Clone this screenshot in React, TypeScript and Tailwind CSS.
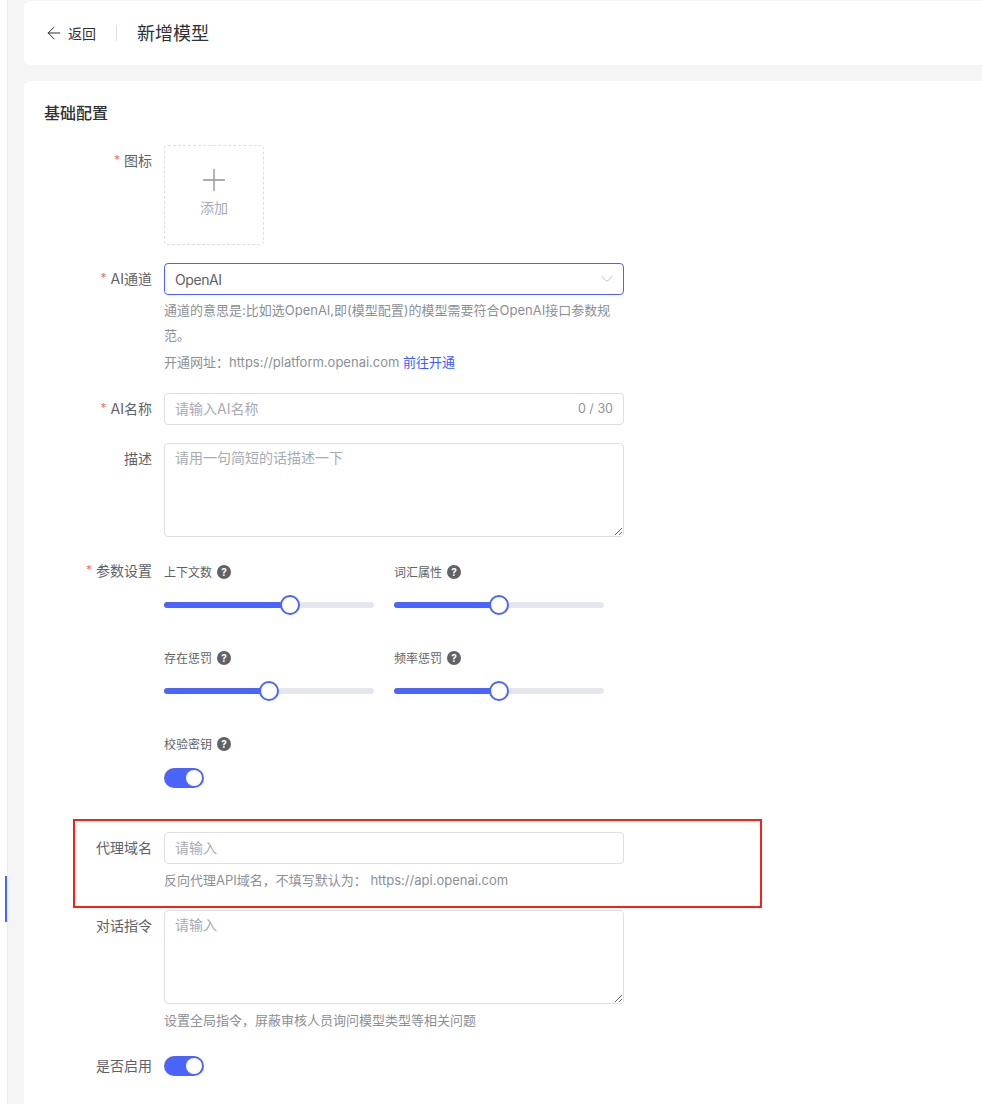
import React from "react";
import { ArrowLeft, ChevronDown, Plus } from "lucide-react";

const font = { fontFamily: '"Inter", "Noto Sans CJK SC", sans-serif' };

function Row({ label, required, className, labelClass, children }: { label: string; required?: boolean; className?: string; labelClass?: string; children: React.ReactNode }) {
  return (
    <div className={`flex ${className ?? ""}`}>
      <div className={`w-[108px] shrink-0 flex justify-end items-center h-[32px] pb-[2px] text-[14px] text-[#5f6268] ${labelClass ?? ""}`}>
        {required && <span className="text-[#f56c6c] mr-[4px] text-[12px] leading-none">*</span>}
        <span>{label}</span>
      </div>
      <div className="ml-[12px] w-[460px]">{children}</div>
    </div>
  );
}

function Help() {
  return (
    <span className="w-[14px] h-[14px] rounded-full bg-[#606266] text-white text-[10px] font-bold leading-none flex items-center justify-center ml-[5px]">?</span>
  );
}

function SliderBlock({ label, pct }: { label: string; pct: number }) {
  return (
    <div className="w-[210px]">
      <div className="flex items-center h-[20px] text-[12px] text-[#606266]">
        <span className="pt-[2px]">{label}</span>
        <Help />
      </div>
      <div className="relative h-[6px] mt-[20px] rounded-full bg-[#e4e7ed]">
        <div className="h-full rounded-full bg-[#4c64fe]" style={{ width: `${pct}%` }} />
        <div className="absolute top-[-7px] w-[20px] h-[20px] -ml-[10px] rounded-full bg-white border-2 border-[#4c64fe]" style={{ left: `${pct}%` }} />
      </div>
    </div>
  );
}

function Switch() {
  return (
    <div className="w-[40px] h-[20px] rounded-full bg-[#4c64fe] relative">
      <div className="absolute right-[2px] top-[2px] w-[16px] h-[16px] rounded-full bg-white" />
    </div>
  );
}

const boxCls = "block w-full border border-[#dcdfe6] rounded-[4px] bg-white px-[10px] text-[14px] text-[#606266] placeholder:text-[#a8abb2] outline-none";

export default function App() {
  return (
    <div className="w-[982px] h-[1104px] overflow-hidden flex bg-[#f5f5f5] relative" style={font}>
      <div className="w-[8px] shrink-0 bg-white border-r border-[#ececec] pt-[876px] flex justify-end">
        <div className="w-[2px] h-[46px] bg-[#4c64fe]" />
      </div>
      <div className="ml-[16px] flex-1 flex flex-col gap-[16px] pt-px">
        <div className="h-[64px] bg-white rounded-l-[6px] flex items-center pl-[20px]">
          <ArrowLeft className="w-[20px] h-[20px] text-[#303133]" strokeWidth={1.2} />
          <span className="ml-[4px] text-[14px] text-[#303133]">返回</span>
          <div className="w-px h-[16px] bg-[#dcdfe6] ml-[20px]" />
          <span className="ml-[20px] text-[18px] text-[#303133]">新增模型</span>
        </div>
        <div className="flex-1 bg-white rounded-tl-[6px] pl-[20px] pt-[20px]">
          <div className="text-[16px] leading-[24px] font-medium text-[#303133]">基础配置</div>
          <Row label="图标" required className="mt-[20px]">
            <div className="w-[100px] h-[100px] border border-dashed border-[#dcdfe6] rounded-[4px] flex flex-col items-center">
              <Plus className="w-[36px] h-[36px] text-[#909399] mt-[16px] shrink-0" strokeWidth={0.9} />
              <span className="text-[14px] leading-[20px] text-[#a8abb2]">添加</span>
            </div>
          </Row>
          <Row label="AI通道" required className="mt-[18px]">
            <div className="h-[32px] border border-[#4c64fe] rounded-[4px] pl-[10px] pr-[6px] flex items-center justify-between text-[14px] tracking-[-0.4px] text-[#606266]">
              <span>OpenAI</span>
              <ChevronDown className="w-[20px] h-[20px] text-[#a8abb2]" strokeWidth={1} />
            </div>
            <div className="text-[13px] leading-[25px] text-[#8c8f96] mt-[3px] w-[450px]">
              通道的意思是:比如选OpenAI,即(模型配置)的模型需要符合OpenAI接口参数规范。
            </div>
            <div className="text-[13px] leading-[25px] text-[#8c8f96] mt-[2px]">
              开通网址：https://platform.openai.com <span className="text-[#3c5cfa]">前往开通</span>
            </div>
          </Row>
          <Row label="AI名称" required className="mt-[18px]">
            <div className="relative">
              <input className={`${boxCls} h-[32px] pb-[2px]`} placeholder="请输入AI名称" readOnly />
              <span className="absolute right-[11px] top-[8px] text-[12.5px] leading-[16px] text-[#909399]">0 / 30</span>
            </div>
          </Row>
          <Row label="描述" className="mt-[18px]">
            <textarea className={`${boxCls} h-[94px] py-[4px] leading-[20px]`} placeholder="请用一句简短的话描述一下" readOnly />
          </Row>
          <Row label="参数设置" required className="mt-[18px]">
            <div className="pt-[7px]">
              <div className="flex gap-[20px]">
                <SliderBlock label="上下文数" pct={60} />
                <SliderBlock label="词汇属性" pct={50} />
              </div>
              <div className="flex gap-[20px] mt-[40px]">
                <SliderBlock label="存在惩罚" pct={50} />
                <SliderBlock label="频率惩罚" pct={50} />
              </div>
              <div className="flex items-center h-[20px] text-[12px] text-[#606266] mt-[40px]">
                <span className="pt-[2px]">校验密钥</span>
                <Help />
              </div>
              <div className="mt-[14px]"><Switch /></div>
            </div>
          </Row>
          <Row label="代理域名" className="mt-[44px]">
            <input className={`${boxCls} h-[32px] pb-[2px]`} placeholder="请输入" readOnly />
            <div className="text-[13px] leading-[20px] text-[#8c8f96] mt-[6px]">反向代理API域名，不填写默认为： https://api.openai.com</div>
          </Row>
          <Row label="对话指令" className="mt-[20px]">
            <textarea className={`${boxCls} h-[94px] py-[4px] leading-[20px]`} placeholder="请输入" readOnly />
            <div className="text-[13px] leading-[20px] text-[#8c8f96] mt-[6px]">设置全局指令，屏蔽审核人员询问模型类型等相关问题</div>
          </Row>
          <Row label="是否启用" className="mt-[26px]" labelClass="!h-[20px]">
            <Switch />
          </Row>
        </div>
      </div>
      <div className="absolute left-[73px] top-[819px] w-[689px] h-[89px] border-2 border-[#f5221b] pointer-events-none" />
    </div>
  );
}
